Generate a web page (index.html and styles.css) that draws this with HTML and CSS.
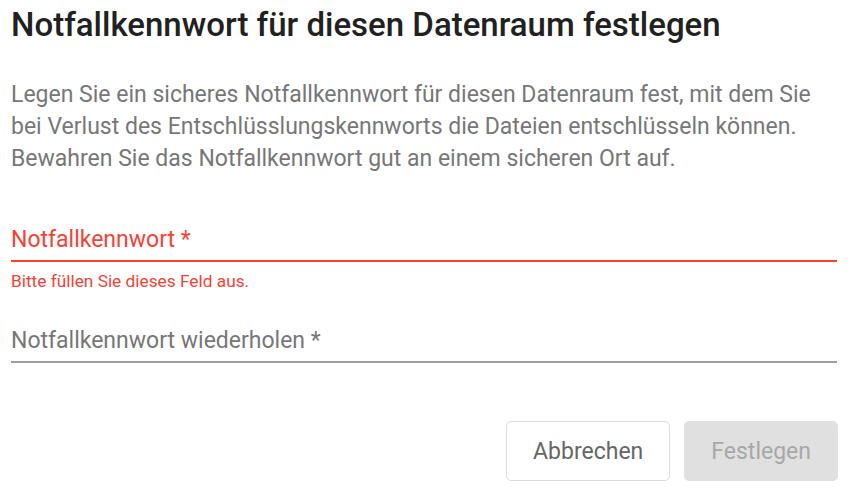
FILE: index.html
```html
<!DOCTYPE html>
<html lang="de">
<head>
    <meta charset="utf-8" />
    <title>Notfallkennwort festlegen</title>
    <meta name="viewport" content="width=device-width, initial-scale=1.0">
    <link rel="stylesheet" href="styles.css">
</head>
<body>

<div class="dialog">
    <h1 class="dialog-title">Notfallkennwort für diesen Datenraum festlegen</h1>

    <p class="dialog-text">Legen Sie ein sicheres Notfallkennwort für diesen Datenraum fest, mit dem Sie bei Verlust des Entschlüsslungskennworts die Dateien entschlüsseln können. Bewahren Sie das Notfallkennwort gut an einem sicheren Ort auf.</p>

    <div class="field field-invalid">
        <div class="field-input">
            <span class="field-label">Notfallkennwort *</span>
        </div>
        <div class="field-hint">Bitte füllen Sie dieses Feld aus.</div>
    </div>

    <div class="field">
        <div class="field-input">
            <span class="field-label">Notfallkennwort wiederholen *</span>
        </div>
    </div>

    <div class="dialog-actions">
        <button class="btn btn-cancel" type="button">Abbrechen</button>
        <button class="btn btn-submit" type="button" disabled>Festlegen</button>
    </div>
</div>

</body>
</html>
```

FILE: styles.css
```css
* {
    margin: 0;
    padding: 0;
    box-sizing: border-box;
}

body {
    font-family: Roboto, "Liberation Sans", Arial, sans-serif;
    background-color: #ffffff;
    color: #212121;
}

.dialog {
    width: 849px;
    padding: 0 12px 0 11px;
}

.dialog-title {
    font-size: 33px;
    font-weight: 500;
    line-height: 40px;
    padding-top: 5px;
    color: #212121;
}

.dialog-text {
    margin-top: 34px;
    font-size: 23px;
    line-height: 32px;
    color: #777777;
}

.field {
    margin-top: 40px;
}

.field-input {
    padding: 11px 0 7px;
    border-bottom: 2px solid #9e9e9e;
}

.field-label {
    display: block;
    font-size: 23px;
    line-height: 27px;
    color: #777777;
}

.field-invalid .field-input {
    border-bottom-color: #f44336;
}

.field-invalid .field-label {
    color: #f44336;
}

.field-hint {
    margin-top: 9px;
    font-size: 17.3px;
    line-height: 20px;
    color: #f44336;
}

.field-invalid + .field {
    margin-top: 25px;
}

.dialog-actions {
    display: flex;
    justify-content: flex-end;
    gap: 14px;
    margin-top: 58px;
    margin-right: -1px;
}

.btn {
    font-family: inherit;
    font-size: 23px;
    font-weight: 400;
    height: 60px;
    border-radius: 5px;
    padding: 0 26px;
    cursor: pointer;
}

.btn-cancel {
    background: #ffffff;
    border: 1px solid #dcdcdc;
    color: #666666;
}

.btn-submit {
    background: #e0e0e0;
    border: 1px solid #e0e0e0;
    color: #a8a8a8;
    cursor: default;
}
```
